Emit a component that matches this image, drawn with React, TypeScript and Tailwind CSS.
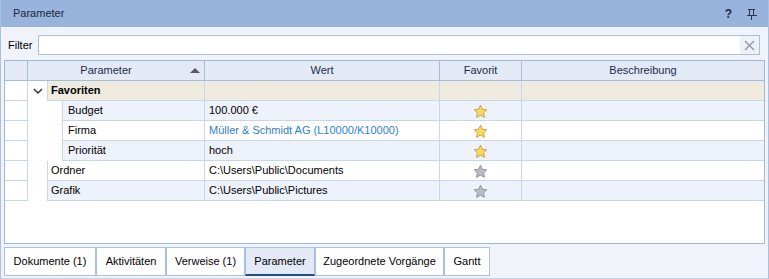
import { ReactNode } from 'react'

type Row = {
  kind: 'group' | 'child' | 'item'
  name: string
  value?: string
  link?: boolean
  fav?: 'gold' | 'gray'
}

const ROWS: Row[] = [
  { kind: 'group', name: 'Favoriten' },
  { kind: 'child', name: 'Budget', value: '100.000 €', fav: 'gold' },
  { kind: 'child', name: 'Firma', value: 'Müller & Schmidt AG (L10000/K10000)', link: true, fav: 'gold' },
  { kind: 'child', name: 'Priorität', value: 'hoch', fav: 'gold' },
  { kind: 'item', name: 'Ordner', value: 'C:\\Users\\Public\\Documents', fav: 'gray' },
  { kind: 'item', name: 'Grafik', value: 'C:\\Users\\Public\\Pictures', fav: 'gray' },
]

const TABS = [
  { label: 'Dokumente (1)', w: 'w-[92px]' },
  { label: 'Aktivitäten', w: 'w-[70px]' },
  { label: 'Verweise (1)', w: 'w-[79px]' },
  { label: 'Parameter', w: 'w-[70px]', active: true },
  { label: 'Zugeordnete Vorgänge', w: 'w-[129px]' },
  { label: 'Gantt', w: 'w-[46px]' },
]

function Star({ color }: { color: 'gold' | 'gray' }) {
  const fill = color === 'gold' ? '#f7d866' : '#b9bdc3'
  const stroke = color === 'gold' ? '#c89d35' : '#8c9299'
  return (
    <svg width="15" height="15" viewBox="0 0 16 16">
      <path
        d="M8 1.3 L10 5.6 L14.7 6.2 L11.3 9.4 L12.2 14.2 L8 11.9 L3.8 14.2 L4.7 9.4 L1.3 6.2 L6 5.6 Z"
        fill={fill}
        stroke={stroke}
        strokeWidth="1"
        strokeLinejoin="round"
      />
    </svg>
  )
}

function Cell({ className, children }: { className: string; children?: ReactNode }) {
  return (
    <div className={`h-full flex items-center border-b border-[#c6d6ec] ${className}`}>
      {children}
    </div>
  )
}

export default function App() {
  return (
    <div className="w-[769px] h-[279px] overflow-hidden bg-[#f0f4fa] border-x border-[#a9c0e0] text-[11px] text-black font-['Liberation_Sans',Arial,sans-serif] flex flex-col">
      {/* Titelleiste */}
      <div className="h-[28px] shrink-0 bg-[#98b4dc] border-b border-[#f4f7fc] flex items-center pl-[12px] pr-[11px] text-[#1a2740]">
        <span className="flex-1">Parameter</span>
        <span className="font-bold text-[12px] mr-[14px]">?</span>
        <svg width="11" height="12" viewBox="0 0 11 12" shapeRendering="crispEdges">
          <path
            d="M2 1.5 H9 M3.5 1.5 V7 M7.5 1.5 V7 M0.5 7.5 H10.5 M5.5 7.5 V11.5"
            stroke="#2a3550"
            strokeWidth="1"
            fill="none"
          />
        </svg>
      </div>

      {/* Filter */}
      <div className="h-[32px] shrink-0 flex pt-[7px] pl-[7px] pr-[8px]">
        <span className="w-[30px] h-[20px] flex items-center">Filter</span>
        <div className="flex-1 h-[20px] border border-[#a9c0e0] bg-white flex justify-end">
          <div className="w-[19px] h-full bg-[#edf1f8] flex items-center justify-center">
            <svg width="11" height="11" viewBox="0 0 11 11">
              <path d="M1 1 L10 10 M10 1 L1 10" stroke="#8e949c" strokeWidth="1.2" />
            </svg>
          </div>
        </div>
      </div>

      {/* Tabelle */}
      <div className="mx-[3px] h-[184px] shrink-0 border border-[#9fb7db] bg-white flex flex-col">
        <div className="h-[20px] shrink-0 flex bg-[#e3eaf6] border-b border-[#a3bcdf] text-[#1b2a4a]">
          <div className="w-[23px] border-r border-[#a3bcdf]" />
          <div className="w-[177px] border-r border-[#a3bcdf] flex items-center relative">
            <span className="flex-1 text-center pr-[20px]">Parameter</span>
            <svg className="absolute right-[4px] top-[7px]" width="10" height="5" viewBox="0 0 10 5">
              <path d="M0 5 L5 0 L10 5 Z" fill="#555b66" />
            </svg>
          </div>
          <div className="w-[235px] border-r border-[#a3bcdf] flex items-center justify-center">Wert</div>
          <div className="w-[82px] border-r border-[#a3bcdf] flex items-center justify-center">Favorit</div>
          <div className="flex-1 flex items-center justify-center">Beschreibung</div>
        </div>

        {ROWS.map((row, i) => {
          const bg =
            row.kind === 'group' ? 'bg-[#efebdf]' : i % 2 === 1 ? 'bg-[#edf2fb]' : 'bg-white'
          return (
            <div key={row.name} className="h-[20px] shrink-0 flex">
              <Cell className="w-[23px] border-r bg-white" />
              <div className="w-[177px] h-full flex border-r border-[#c6d6ec]">
                {row.kind === 'group' ? (
                  <div className="w-[19px] h-full flex items-center justify-center">
                    <svg width="10" height="6" viewBox="0 0 10 6">
                      <path d="M1 1 L5 5 L9 1" stroke="#2c2c2c" strokeWidth="1.4" fill="none" />
                    </svg>
                  </div>
                ) : (
                  <div className={row.kind === 'child' ? 'w-[34px]' : 'w-[19px]'} />
                )}
                <Cell
                  className={`flex-1 border-l ${bg} ${
                    row.kind === 'group' ? 'pl-[3px] font-bold' : row.kind === 'child' ? 'pl-[5px]' : 'pl-[3px]'
                  }`}
                >
                  {row.name}
                </Cell>
              </div>
              <Cell className={`w-[235px] border-r pl-[4px] ${bg} ${row.link ? 'text-[#2f80d0]' : ''}`}>
                {row.value}
              </Cell>
              <Cell className={`w-[82px] border-r justify-center pt-[1px] ${bg}`}>
                {row.fav && <Star color={row.fav} />}
              </Cell>
              <Cell className={`flex-1 ${bg}`} />
            </div>
          )
        })}
      </div>

      {/* Reiter */}
      <div className="flex-1 flex items-start pt-[3px] pl-[3px] border-b border-[#c5d5ea]">
        {TABS.map((t) => (
          <div
            key={t.label}
            className={`${t.w} h-[29px] border border-[#a9c0e0] flex items-center justify-center ${
              t.active ? 'bg-[#e3eaf6] border-b-2 border-b-[#1f4f85]' : 'bg-white'
            }`}
          >
            {t.label}
          </div>
        ))}
      </div>
    </div>
  )
}
